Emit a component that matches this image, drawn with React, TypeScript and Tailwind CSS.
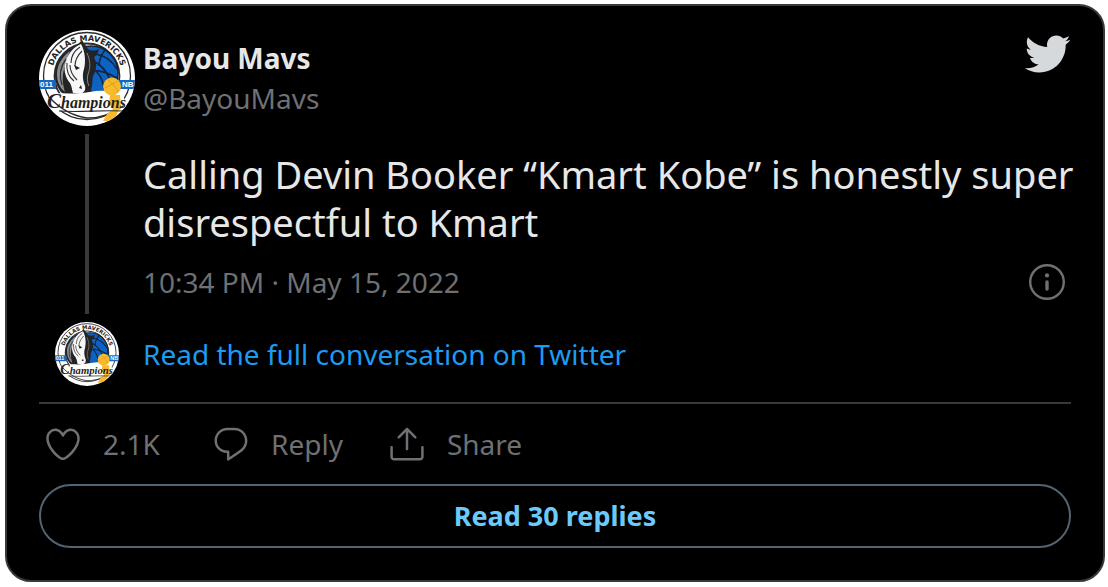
import { useId } from "react";
import type { ReactNode } from "react";

function TeamAvatar({ className }: { className: string }) {
  const id = useId();
  const clip = `${id}-clip`;
  const arc = `${id}-arc`;
  return (
    <svg viewBox="0 0 96 96" className={className} role="img" aria-label="Bayou Mavs avatar">
      <defs>
        <clipPath id={clip}>
          <circle cx="48" cy="48" r="48" />
        </clipPath>
        <path id={arc} d="M13.7 54 A35.2 35.2 0 1 1 82.3 54" />
      </defs>
      <g clipPath={`url(#${clip})`}>
        <rect width="96" height="96" fill="#fff" />
        <circle cx="48" cy="46" r="43.5" fill="none" stroke="#2b2b2d" strokeWidth="1.3" />
        <circle cx="48" cy="46" r="32.5" fill="#fff" stroke="#2b2b2d" strokeWidth="1.8" />
        <text fontFamily="DejaVu Sans, sans-serif" fontWeight="700" fontSize="8" fill="#222">
          <textPath href={`#${arc}`} startOffset="50%" textAnchor="middle">
            DALLAS MAVERICKS
          </textPath>
        </text>
        <circle cx="52" cy="43" r="27" fill="#0c63c4" stroke="#1d2430" strokeWidth="1.6" />
        <g fill="none" stroke="#14233f" strokeWidth="1.6">
          <path d="M56 24 C65 25 73 31 78 39" />
          <path d="M56 32 C64 36 70 45 73 56" />
          <path d="M57 41 C62 46 65 53 65 62" />
          <path d="M66 20 C62 25 60 30 60 36" />
          <path d="M78 48 C69 43 62 40 56 41" />
        </g>
        <path d="M0 50 H17 V59 H0z M79 50 H96 V59 H79z" fill="#1767c0" />
        <g fontFamily="Liberation Sans, sans-serif" fontWeight="700" fontSize="8" fill="#fff">
          <text x="1" y="57.4">011</text>
          <text x="83" y="57.4">NB</text>
        </g>
        <path
          d="M43 10 C41 13 38 15 33 18 C23 23 16 33 16 45 C16 53 19 60 25 65 L54 65 L52 59 C54 55 53 51 54 46 C58 40 58 33 55 27 C57 26 59 24 60 19 C56 21 52 21 49 19 C47 15 45 14 43 10z"
          fill="#232325"
        />
        <path d="M31 21 C23 27 18 35 18 44 C18 52 21 58 26 62 C23 53 23 44 26 36 C27 30 29 25 31 21z" fill="#8c8d90" />
        <path d="M27 29 C21 37 20 46 23 55" fill="none" stroke="#303033" strokeWidth="1.3" />
        <path
          d="M42 14 C35 17 29 23 27 31 C24 39 26 47 31 53 C33 57 33 60 34 63 L41 64 C45 63 47 60 46 56 C44 51 43 45 45 39 C47 31 46 21 42 14z"
          fill="#f7f7f7"
        />
        <path
          d="M41 17 C35 21 32 27 32 33 M43 21 C38 26 36 31 36 36 M28 33 C27 41 30 47 35 51 M31 35 C31 42 34 46 38 50"
          fill="none"
          stroke="#303033"
          strokeWidth="1.1"
        />
        <path d="M35 35 L41 38 L37 40z M40 58 L42 55 L43 59z" fill="#222" />
        <path
          d="M48 23 C51 30 52 37 49 44 C48 48 48 52 50 56"
          fill="none"
          stroke="#8c8d90"
          strokeWidth="0.9"
        />
        <path d="M10 66 C20 61 32 65 44 63 C58 60 70 60 83 61 L88 78 C74 83 60 80 48 82 L12 80z" fill="#fff" />
        <path d="M10 67 C22 80 34 86 48 88 C62 88 74 84 84 76" fill="none" stroke="#2b2b2d" strokeWidth="1.3" />
        <circle cx="73" cy="56.5" r="9" fill="#f8b92b" />
        <path d="M66 58 L79 51 M69 50 C74 54 77 57 79 62" stroke="#d49818" strokeWidth="0.8" fill="none" />
        <path d="M71 65 L81 65 L82 76 L78 84 L74 91 L64 91 L68 84 L74 79 L70 74z" fill="#f8b92b" />
        <text
          x="8"
          y="78"
          fontFamily="Liberation Serif, serif"
          fontStyle="italic"
          fontWeight="700"
          fontSize="16"
          fill="#1f1f21"
        >
          <tspan fontSize="21">C</tspan>hampions
        </text>
        <path d="M20 81 C40 82.5 60 80 84 81" fill="none" stroke="#29292b" strokeWidth="1.1" />
      </g>
    </svg>
  );
}

function TwitterBird() {
  return (
    <svg viewBox="0 0 24 24" className="size-12 fill-[#d6d9db]" aria-hidden="true">
      <path d="M23.643 4.937c-.835.37-1.732.62-2.675.733.962-.576 1.7-1.49 2.048-2.578-.9.534-1.897.922-2.958 1.13-.85-.904-2.06-1.47-3.4-1.47-2.572 0-4.658 2.086-4.658 4.66 0 .364.042.718.12 1.06-3.873-.195-7.304-2.05-9.602-4.868-.4.69-.63 1.49-.63 2.342 0 1.616.823 3.043 2.072 3.878-.764-.025-1.482-.234-2.11-.583v.06c0 2.257 1.605 4.14 3.737 4.568-.392.106-.803.162-1.227.162-.3 0-.593-.028-.877-.082.593 1.85 2.313 3.198 4.352 3.234-1.595 1.25-3.604 1.995-5.786 1.995-.376 0-.747-.022-1.112-.065 2.062 1.323 4.51 2.093 7.14 2.093 8.57 0 13.255-7.098 13.255-13.254 0-.2-.005-.402-.014-.602.91-.658 1.7-1.477 2.323-2.41z" />
    </svg>
  );
}

function Action({ label, children }: { label: string; children: ReactNode }) {
  return (
    <button type="button" className="flex h-10 cursor-pointer items-center gap-5">
      <svg viewBox="0 0 24 24" className="size-10 fill-current" aria-hidden="true">
        {children}
      </svg>
      <span className="min-w-16 text-left">{label}</span>
    </button>
  );
}

export default function App() {
  return (
    <main className="bg-white py-1 pr-[3px] pl-[5px] font-['Noto_Sans',sans-serif]">
      <article className="rounded-[26px] border-2 border-[#38393b] bg-black px-8 pt-6 pb-8 text-[28px] leading-10 text-[#6e7073]">
        <div className="grid grid-cols-[96px_1fr] gap-2">
          <div className="flex flex-col items-center gap-2">
            <TeamAvatar className="size-24" />
            <div className="w-1 flex-1 bg-[#38393b]" />
          </div>
          <div className="pb-3">
            <header className="flex items-start justify-between">
              <div className="flex flex-col pt-2">
                <a href="#profile" className="font-bold text-[#e7e7e8]">
                  Bayou Mavs
                </a>
                <a href="#profile">@BayouMavs</a>
              </div>
              <a href="#twitter" aria-label="View on Twitter">
                <TwitterBird />
              </a>
            </header>
            <p className="-mr-2 mt-8 text-[38px] leading-12 text-[#e7e7e8]">
              Calling Devin Booker “Kmart Kobe” is honestly super disrespectful to Kmart
            </p>
            <div className="mt-4 flex items-center justify-between pr-1">
              <a href="#status">10:34 PM · May 15, 2022</a>
              <button type="button" aria-label="Twitter Ads info and privacy" className="cursor-pointer">
                <svg viewBox="0 0 40 40" className="size-10" aria-hidden="true">
                  <circle cx="20" cy="20" r="16.8" fill="none" stroke="currentColor" strokeWidth="2.4" />
                  <circle cx="20" cy="13.4" r="2.1" fill="currentColor" />
                  <path d="M20 20v7" stroke="currentColor" strokeWidth="3.4" strokeLinecap="round" />
                </svg>
              </button>
            </div>
          </div>
          <TeamAvatar className="size-16 justify-self-center" />
          <a href="#conversation" className="self-center text-[#1d9bf0]">
            Read the full conversation on Twitter
          </a>
        </div>
        <div className="mt-4 flex gap-11 border-t-2 border-[#38393b] px-1 py-5">
          <Action label="2.1K">
            <path d="M12 21.638h-.014C9.403 21.59 1.95 14.856 1.95 8.478c0-3.064 2.525-5.754 5.403-5.754 2.29 0 3.83 1.58 4.646 2.73.814-1.148 2.354-2.73 4.645-2.73 2.88 0 5.404 2.69 5.404 5.755 0 6.376-7.454 13.11-10.037 13.157H12zM7.354 4.225c-2.08 0-3.903 1.988-3.903 4.255 0 5.74 7.034 11.596 8.55 11.658 1.518-.062 8.55-5.917 8.55-11.658 0-2.267-1.823-4.255-3.903-4.255-2.528 0-3.94 2.936-3.952 2.965-.23.562-1.156.562-1.387 0-.014-.03-1.425-2.965-3.954-2.965z" />
          </Action>
          <Action label="Reply">
            <path d="M14.046 2.242l-4.148-.01h-.002c-4.374 0-7.8 3.427-7.8 7.802 0 4.098 3.186 7.206 7.465 7.37v3.828c0 .108.044.286.12.403.142.225.384.347.632.347.138 0 .277-.038.402-.118.264-.168 6.473-4.14 8.088-5.506 1.902-1.61 3.04-3.97 3.043-6.312v-.017c-.006-4.367-3.43-7.787-7.8-7.788zm3.787 12.972c-1.134.96-4.862 3.405-6.772 4.643V16.67c0-.414-.335-.75-.75-.75h-.396c-3.66 0-6.318-2.476-6.318-5.886 0-3.534 2.768-6.302 6.3-6.302l4.147.01h.002c3.532 0 6.3 2.766 6.302 6.296-.003 1.91-.942 3.844-2.514 5.176z" />
          </Action>
          <Action label="Share">
            <path d="M17.53 7.47l-5-5c-.293-.293-.768-.293-1.06 0l-5 5c-.294.293-.294.768 0 1.06s.767.294 1.06 0l3.72-3.72V15c0 .414.336.75.75.75s.75-.336.75-.75V4.81l3.72 3.72c.146.147.338.22.53.22s.384-.072.53-.22c.293-.293.293-.767 0-1.06z" />
            <path d="M19.708 21.944H4.292C3.028 21.944 2 20.916 2 19.652V14c0-.414.336-.75.75-.75s.75.336.75.75v5.652c0 .437.355.792.792.792h15.416c.437 0 .792-.355.792-.792V14c0-.414.336-.75.75-.75s.75.336.75.75v5.652c0 1.264-1.028 2.292-2.292 2.292z" />
          </Action>
        </div>
        <button
          type="button"
          className="flex h-16 w-full cursor-pointer items-center justify-center rounded-full border-2 border-[#536471] text-[27px] font-bold text-[#6bc9fb]"
        >
          Read 30 replies
        </button>
      </article>
    </main>
  );
}
